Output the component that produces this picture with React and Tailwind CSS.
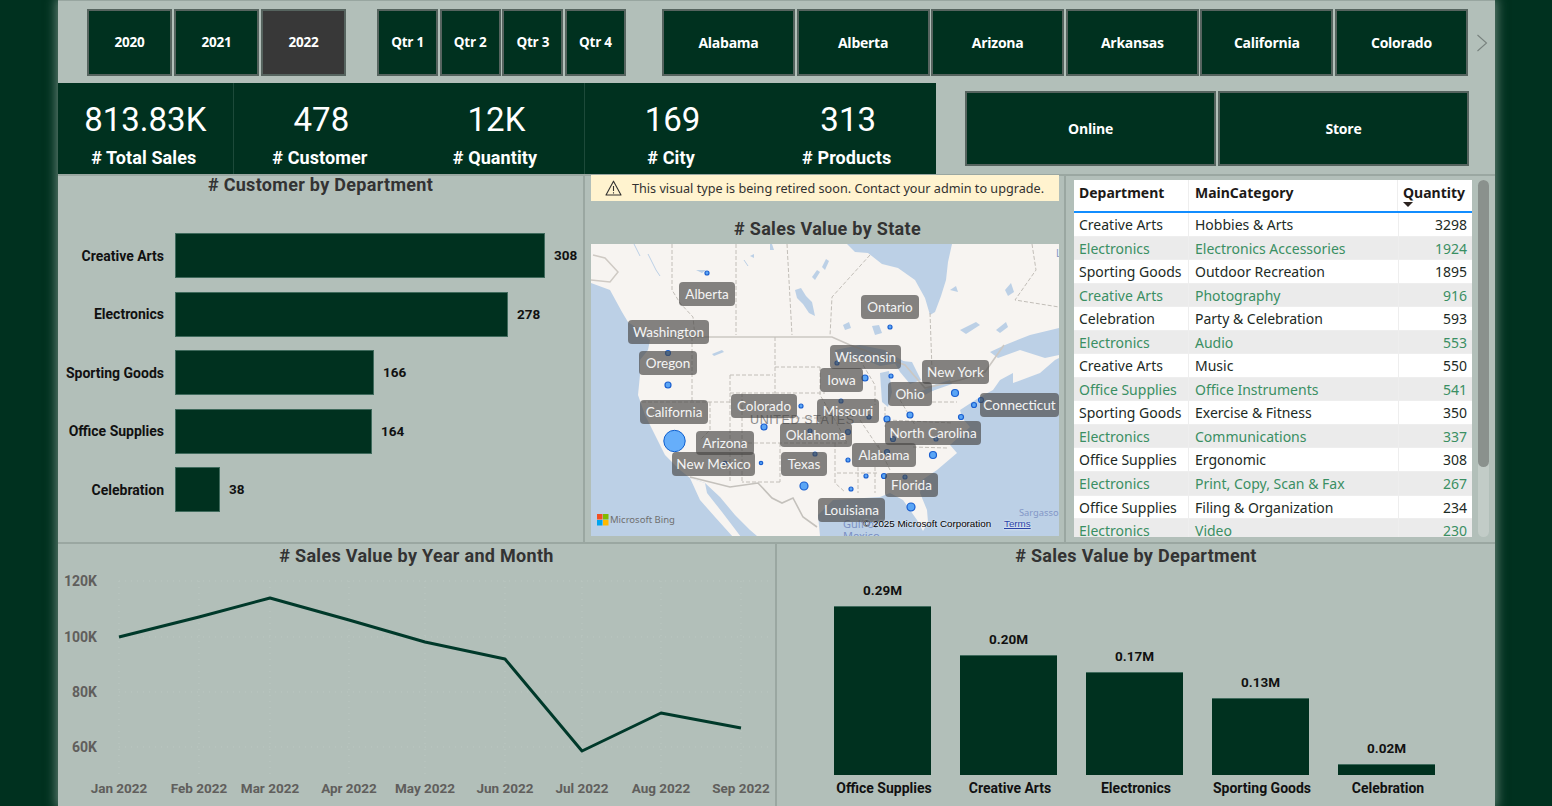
import React from "react";

const rows = [
  ["Creative Arts", "Hobbies & Arts", "3298"],
  ["Electronics", "Electronics Accessories", "1924"],
  ["Sporting Goods", "Outdoor Recreation", "1895"],
  ["Creative Arts", "Photography", "916"],
  ["Celebration", "Party & Celebration", "593"],
  ["Electronics", "Audio", "553"],
  ["Creative Arts", "Music", "550"],
  ["Office Supplies", "Office Instruments", "541"],
  ["Sporting Goods", "Exercise & Fitness", "350"],
  ["Electronics", "Communications", "337"],
  ["Office Supplies", "Ergonomic", "308"],
  ["Electronics", "Print, Copy, Scan & Fax", "267"],
  ["Office Supplies", "Filing & Organization", "234"],
  ["Electronics", "Video", "230"],
];

const labels = [
  ["Alberta", 679, 282, 56],
  ["Ontario", 861, 295, 58],
  ["Washington", 628, 320, 81],
  ["Oregon", 639, 351, 58],
  ["Wisconsin", 830, 345, 71],
  ["Iowa", 820, 368, 43],
  ["New York", 922, 360, 67],
  ["Ohio", 888, 382, 44],
  ["Connecticut", 980, 393, 79],
  ["Colorado", 731, 394, 66],
  ["Missouri", 817, 399, 62],
  ["California", 640, 400, 68],
  ["Oklahoma", 780, 423, 72],
  ["North Carolina", 885, 421, 96],
  ["Arizona", 696, 431, 58],
  ["Alabama", 852, 443, 64],
  ["New Mexico", 672, 452, 83],
  ["Texas", 781, 452, 46],
  ["Florida", 885, 473, 53],
  ["Louisiana", 818, 498, 67],
];

const dots = [
  [707, 273, 2], [890, 327, 2], [668, 353, 2.5], [668, 385, 3], [837, 363, 2], [865, 378, 3],
  [891, 376, 2], [955, 393, 3.5], [974, 405, 2.5], [981, 400, 2.5], [961, 417, 2.5], [910, 415, 3],
  [887, 419, 3], [841, 401, 2], [869, 417, 2], [801, 406, 2], [764, 427, 3], [810, 431, 2],
  [848, 432, 2.5], [893, 439, 2.5], [936, 439, 2], [887, 452, 2.5], [933, 455, 3.5], [815, 454, 2],
  [848, 460, 2], [761, 463, 1.7], [725, 463, 1.7], [866, 476, 2], [884, 476, 2.5], [905, 477, 2],
  [851, 489, 2], [804, 486, 4], [911, 507, 4],
];

const borders = [
  "M672 244V290L680 303L693 317L695 337",
  "M736 244V335",
  "M787 244L792 335",
  "M870 255L832 297L830 336",
  "M930 313L932 370",
  "M1032 244L1036 270L1015 300L1059 307",
  "M692 337V402",
  "M642 402H730",
  "M710 402V430L700 440",
  "M730 375V483",
  "M730 375H773",
  "M775 337V393",
  "M775 367H820",
  "M742 393V482",
  "M730 393H775",
  "M742 443H847",
  "M780 443V482",
  "M780 482H742",
  "M835 443V483L845 492",
  "M820 367V395L835 420L847 443",
  "M772 418H828",
  "M775 393H825",
  "M860 360L875 385V405",
  "M885 407V427",
  "M932 402H957",
  "M887 420L953 423",
  "M913 447L947 448",
  "M837 473H877",
  "M858 467V493",
  "M875 467V493",
  "M878 445L890 470",
  "M900 400L915 425",
  "M860 420L880 450",
];

const lakes = [
  "M847 244L855 252L868 253L882 264L898 268L915 280L925 298L930 315L935 312L941 296L946 280L948 262L952 244Z",
  "M835 350L860 345L885 350L905 362L880 366L860 358L838 358Z",
  "M880 373L889 371L892 392L888 407L882 402Z",
  "M893 360L912 362L921 380L910 384L900 372Z",
  "M917 393L937 384L938 388L921 397Z",
  "M927 387L950 380L952 384L932 391Z",
  "M795 290L801 288L806 296L812 302L815 316L809 313L803 304L797 298Z",
  "M812 277L817 270L820 272L815 280Z",
  "M822 267L826 259L829 261L825 270Z",
  "M770 244L772 244L774 250L770 250Z",
  "M1059 328L1030 335L1005 345L990 352L998 358L1020 350L1045 358L1059 355Z",
  "M996 330L1006 322L1008 327L1000 333Z",
  "M960 330L976 322L980 325L966 334Z",
  "M1005 290L1011 283L1014 292L1008 296Z",
  "M950 290L956 286L958 292Z",
  "M843 325L849 322L851 328L845 330Z",
  "M872 326L879 325L882 333L875 335Z",
  "M696 270L706 270L702 273Z",
  "M750 256L754 254L754 258Z",
  "M712 354L722 350L724 352L714 356Z",
];

const rivers = [
  "M648 254L656 270L660 276",
  "M744 260L748 266",
  "M634 244L640 256",
];

function Btn({ className, children, active }) {
  return (
    <div
      className={`flex items-center justify-center border-2 border-[#56645f] text-white font-['Open_Sans',sans-serif] font-bold text-[13.5px] tracking-[-0.25px] ${
        active ? "bg-[#383838]" : "bg-[#00311f]"
      } ${className}`}
    >
      {children}
    </div>
  );
}

function Kpi({ value, label, border }) {
  return (
    <div className={`flex w-[175.6px] flex-col items-center ${border ? "border-r border-[#1d4a3a]" : ""}`}>
      <div className="mt-[14px] h-[46px] text-[33px] leading-[46px] font-normal text-white font-['Roboto',sans-serif]">{value}</div>
      <div className="mt-[3px] -ml-[3px] text-[18px] leading-[24px] font-bold text-white font-['Roboto',sans-serif] tracking-[0.1px]">{label}</div>
    </div>
  );
}

function Title({ children, className = "" }) {
  return (
    <div className={`text-center text-[18px] leading-[24px] font-bold tracking-[0.3px] text-[#333333] font-['Roboto',sans-serif] ${className}`}>
      {children}
    </div>
  );
}

function HBar({ label, width, value }) {
  return (
    <div className="flex h-[45px] items-center">
      <div className="w-[106px] pt-[1px] text-right text-[14px] font-bold text-[#111111] font-['Roboto',sans-serif]">{label}</div>
      <div className="ml-[11px] h-[45px] bg-[#00311f] border border-[#3f6a5c]" style={{ width }} />
      <div className="ml-[9px] text-[13.5px] font-bold text-[#111111] font-['Roboto',sans-serif]">{value}</div>
    </div>
  );
}

function VBar({ label, height, value }) {
  return (
    <div className="flex h-[238px] w-[97px] flex-col items-center justify-end">
      <div className="mb-[7px] text-[13.5px] leading-[18px] font-bold text-[#111111] font-['Roboto',sans-serif]">{value}</div>
      <div className="w-[97px] bg-[#00311f] border-t border-[#3f6a5c]" style={{ height }} />
      <div className="h-[31px] w-[130px] pt-[4px] pl-[3px] text-center text-[14px] leading-[18px] font-bold text-[#111111] font-['Roboto',sans-serif]">{label}</div>
    </div>
  );
}

function MapBox() {
  return (
    <div className="relative h-[292px] w-[468px] overflow-hidden bg-[#bcd0e6]">
      <svg viewBox="591 244 468 292" width="468" height="292" className="block">
        <path
          fill="#f7f4f1"
          d="M591 244V283L610 290L622 312L628 322L640 330L650 340L648 350L640 360L640 375L638 395L645 415L655 435L665 455L680 470L690 478L705 483L720 497L735 515L750 530L757 536H820L818 515L833 500L880 497L890 493L903 500L917 520L923 531L928 522L927 510L920 493L922 480L937 470L957 453L950 445L970 427L962 418L960 410L980 397L993 390L1000 380L1013 373L1013 383L1040 373L1055 360L1059 358V244Z"
        />
        <path fill="#f7f4f1" d="M690 478L700 500L715 517L733 537H741L722 512L707 493L705 483Z" />
        {lakes.map((d, i) => (
          <path key={i} d={d} fill="#bcd0e6" />
        ))}
        {rivers.map((d, i) => (
          <path key={i} d={d} fill="none" stroke="#bcd0e6" strokeWidth="1" />
        ))}
        <path d="M593 255L605 258L618 272L610 282L591 280" fill="none" stroke="#cfcac4" strokeWidth="1.5" />
        <path d="M665 337H832L850 345L905 365L925 388L960 380L985 372L1004 345" fill="none" stroke="#cbc7c2" strokeWidth="1.6" />
        <path d="M690 477L730 487L758 483L772 498L782 503L793 498L803 517L817 527" fill="none" stroke="#c4c1bc" strokeWidth="1.6" />
        {borders.map((d, i) => (
          <path key={i} d={d} fill="none" stroke="#c2beb8" strokeWidth="1" strokeDasharray="4 2" />
        ))}
        <text x="750" y="424" fontSize="12.5" letterSpacing="0.6" fill="#8a8a8a" fontFamily="'Liberation Sans', sans-serif">UNITED STATES</text>
        <text x="843" y="528" fontSize="11" fill="#7b90c4" fontFamily="'Noto Sans', sans-serif">Gulf of</text>
        <text x="843" y="540" fontSize="11" fill="#7b90c4" fontFamily="'Noto Sans', sans-serif">Mexico</text>
        <text x="1019" y="516" fontSize="9.3" fill="#8397c6" fontFamily="'Noto Sans', sans-serif">Sargasso</text>
        <text x="1056" y="257" fontSize="10" fill="#8397c6" fontFamily="'Noto Sans', sans-serif">L</text>
        <circle cx="674.5" cy="441" r="10.7" fill="#66aefa" stroke="#1160cf" strokeWidth="1" />
        {dots.map(([x, y, r], i) => (
          <circle key={i} cx={x} cy={y} r={r} fill="#5aa5f5" stroke="#1a5fd0" strokeWidth="1.2" />
        ))}
        <rect x="597" y="514" width="5.5" height="5.5" fill="#f25022" />
        <rect x="603" y="514" width="5.5" height="5.5" fill="#7fba00" />
        <rect x="597" y="520" width="5.5" height="5.5" fill="#00a4ef" />
        <rect x="603" y="520" width="5.5" height="5.5" fill="#ffb900" />
        <text x="610" y="523" fontSize="9.5" fill="#6f6f6f" fontFamily="'Noto Sans', sans-serif">Microsoft Bing</text>
      </svg>
      {labels.map(([t, x, y, w]) => (
        <div
          key={t}
          className="absolute flex h-[24px] items-center justify-center rounded-[4px] bg-[rgba(72,70,68,0.66)] text-[13.5px] text-[#f4f4f4] font-['Lato',sans-serif]"
          style={{ left: x - 591, top: y - 244, width: w }}
        >
          {t}
        </div>
      ))}
      <div className="absolute left-[272px] top-[274px] text-[9.8px] leading-[12px] text-black font-['Liberation_Sans',sans-serif] [text-shadow:0_0_2px_#fff]">© 2025 Microsoft Corporation</div>
      <div className="absolute left-[413px] top-[274px] text-[9.8px] leading-[12px] text-[#2a43a8] underline font-['Liberation_Sans',sans-serif] [text-shadow:0_0_2px_#fff]">Terms</div>
    </div>
  );
}

function LineChart() {
  const xs = [119, 199, 270, 349, 425, 505, 582, 661, 741];
  const names = ["Jan 2022", "Feb 2022", "Mar 2022", "Apr 2022", "May 2022", "Jun 2022", "Jul 2022", "Aug 2022", "Sep 2022"];
  const ys = [["120K", 581], ["100K", 637], ["80K", 692], ["60K", 747]];
  const font = "Roboto, sans-serif";
  return (
    <svg viewBox="58 569 718 237" width="718" height="237" className="mt-[1px] block">
      {ys.map(([t, y]) => (
        <g key={t}>
          <line x1="119" x2="770" y1={y} y2={y} stroke="#bcc8c2" strokeDasharray="1 5" />
          <text x="97" y={y + 5} textAnchor="end" fontSize="14" fontWeight="700" fill="#605e5c" fontFamily={font}>{t}</text>
        </g>
      ))}
      {xs.map((x, i) => (
        <g key={x}>
          <line x1={x} x2={x} y1="581" y2="775" stroke="#bcc8c2" strokeDasharray="1 5" />
          <text x={x} y="793" textAnchor="middle" fontSize="13.5" fontWeight="700" fill="#605e5c" fontFamily={font}>{names[i]}</text>
        </g>
      ))}
      <polyline
        points="119,637 199,617 270,598 349,620 425,642 505,659 582,751 661,713 741,728"
        fill="none"
        stroke="#00392a"
        strokeWidth="3"
        strokeLinejoin="round"
      />
    </svg>
  );
}

export default function App() {
  return (
    <div className="flex h-[806px] w-[1552px] overflow-hidden bg-[#00311f]">
      <div className="w-[58px] shrink-0" />
      <div className="relative z-10 flex h-[806px] w-[1437px] shrink-0 flex-col bg-[#b2bfb9] shadow-[0_0_10px_2px_rgba(178,191,185,0.55)]">
        {/* slicers */}
        <div className="flex h-[83px] shrink-0 items-start border-t border-[#98a6a0] pl-[29px] pt-[8px]">
          <div className="flex h-[67px] gap-[2px]">
            <Btn className="w-[85px]">2020</Btn>
            <Btn className="w-[85px]">2021</Btn>
            <Btn className="w-[85px]" active>2022</Btn>
          </div>
          <div className="ml-[31px] flex h-[67px] gap-[1.67px]">
            {["Qtr 1", "Qtr 2", "Qtr 3", "Qtr 4"].map((q) => (
              <Btn key={q} className="w-[61px]">{q}</Btn>
            ))}
          </div>
          <div className="ml-[36px] flex h-[67px] gap-[1.6px]">
            {["Alabama", "Alberta", "Arizona", "Arkansas", "California", "Colorado"].map((s) => (
              <Btn key={s} className="w-[133px] text-[14px]">{s}</Btn>
            ))}
          </div>
          <svg width="12" height="18" viewBox="0 0 12 18" className="ml-[8px] mt-[25px]">
            <path d="M1.5 1L10.5 9L1.5 17" fill="none" stroke="#78827e" strokeWidth="1.1" />
          </svg>
        </div>
        {/* KPIs */}
        <div className="flex h-[91px] shrink-0">
          <div className="flex w-[878px] bg-[#00311f]">
            <Kpi value="813.83K" label="# Total Sales" border />
            <Kpi value="478" label="# Customer" />
            <Kpi value="12K" label="# Quantity" border />
            <Kpi value="169" label="# City" />
            <Kpi value="313" label="# Products" />
          </div>
          <div className="ml-[29px] mt-[8px] flex h-[75px] gap-[2px]">
            <Btn className="w-[251px] text-[14px]">Online</Btn>
            <Btn className="w-[251px] text-[14px]">Store</Btn>
          </div>
        </div>
        {/* middle */}
        <div className="flex h-[370px] shrink-0 border-y-2 border-[#9aa7a1]">
          <div className="w-[527px] shrink-0 border-r-2 border-[#9aa7a1]">
            <Title className="-mt-[3px]">
              # Customer by Department
            </Title>
            <div className="mt-[36px] flex flex-col gap-[13.5px]">
              <HBar label="Creative Arts" width={370} value="308" />
              <HBar label="Electronics" width={333} value="278" />
              <HBar label="Sporting Goods" width={199} value="166" />
              <HBar label="Office Supplies" width={197} value="164" />
              <HBar label="Celebration" width={45} value="38" />
            </div>
          </div>
          <div className="w-[481px] shrink-0 border-r-2 border-[#9aa7a1] pl-[6px]">
            <div className="-mt-[1px] flex h-[26px] w-[468px] items-center bg-[#fff3cf] pl-[14px] text-[12.65px] text-[#323130] font-['Noto_Sans',sans-serif]">
              <svg width="17" height="16" viewBox="0 0 17 16">
                <path d="M8.5 1.2L16 15H1Z" fill="none" stroke="#323130" strokeWidth="1.1" strokeLinejoin="round" />
                <path d="M8.5 6V11M8.5 12.2V13.4" stroke="#323130" strokeWidth="1.1" />
              </svg>
              <span className="ml-[10px] whitespace-nowrap">This visual type is being retired soon. Contact your admin to upgrade.</span>
            </div>
            <Title className="mt-[16px] mb-[3px]">
              # Sales Value by State
            </Title>
            <MapBox />
          </div>
          <div className="relative flex-1 pl-[8px] pt-[4px]">
            <div className="h-[357px] w-[398px] overflow-hidden bg-white font-['Noto_Sans',sans-serif]">
              <div className="flex h-[33px] border-b-2 border-[#118dff] text-[14px] font-bold text-[#1d1a18]">
                <div className="w-[115px] border-r border-[#eeeeee] pl-[5px] leading-[25px]">Department</div>
                <div className="w-[209px] border-r border-[#eeeeee] pl-[6px] leading-[25px]">MainCategory</div>
                <div className="relative flex-1 pl-[5px] leading-[25px]">
                  Quantity
                  <svg width="10" height="5" viewBox="0 0 10 5" className="absolute left-[5px] top-[22px]">
                    <path d="M0 0H10L5 5Z" fill="#2b2320" />
                  </svg>
                </div>
              </div>
              {rows.map((r, i) => (
                <div
                  key={i}
                  className={`flex h-[23.55px] text-[14px] leading-[24px] border-b border-[#eeeeee] ${
                    i % 2 ? "bg-[#ebebeb] text-[#3a8f63]" : "bg-white text-[#1c2a24]"
                  }`}
                >
                  <div className="w-[115px] whitespace-nowrap border-r border-[#eeeeee] pl-[5px]">{r[0]}</div>
                  <div className="w-[210px] whitespace-nowrap border-r border-[#eeeeee] pl-[6px]">{r[1]}</div>
                  <div className="flex-1 pr-[5px] text-right">{r[2]}</div>
                </div>
              ))}
            </div>
            <div className="absolute left-[412px] top-[4px] h-[357px] w-[11px] rounded-full bg-[#c2ccc7]">
              <div className="h-[287px] w-[11px] rounded-full bg-[#8a918d]" />
            </div>
          </div>
        </div>
        {/* bottom */}
        <div className="flex min-h-0 flex-1">
          <div className="w-[719px] shrink-0 border-r-2 border-[#9aa7a1]">
            <Title>
              # Sales Value by Year and Month
            </Title>
            <LineChart />
          </div>
          <div className="flex-1">
            <Title>
              # Sales Value by Department
            </Title>
            <div className="flex gap-[29px] pl-[57px]">
              <VBar label="Office Supplies" height={169} value="0.29M" />
              <VBar label="Creative Arts" height={120} value="0.20M" />
              <VBar label="Electronics" height={103} value="0.17M" />
              <VBar label="Sporting Goods" height={77} value="0.13M" />
              <VBar label="Celebration" height={11} value="0.02M" />
            </div>
          </div>
        </div>
      </div>
      <div className="flex-1" />
    </div>
  );
}
